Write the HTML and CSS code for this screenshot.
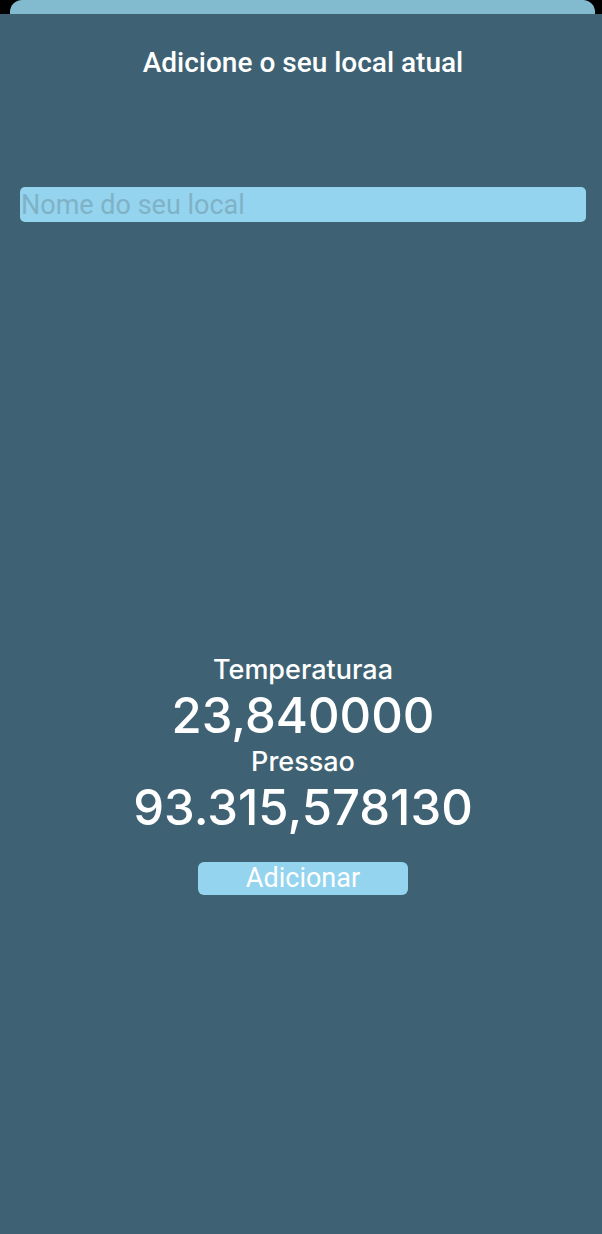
FILE: index.html
```html
<!DOCTYPE html>
<html lang="pt">
<head>
<meta charset="utf-8">
<link rel="stylesheet" href="styles.css">
</head>
<body>
<div class="back-sheet"></div>
<main class="sheet">
  <h1 class="title">Adicione o seu local atual</h1>
  <input class="name-input" type="text" placeholder="Nome do seu local">
  <section class="readings">
    <div class="label">Temperaturaa</div>
    <div class="value">23,840000</div>
    <div class="label">Pressao</div>
    <div class="value">93.315,578130</div>
    <button class="add-btn">Adicionar</button>
  </section>
</main>
</body>
</html>
```

FILE: styles.css
```css
html, body {
  margin: 0;
  padding: 0;
  background: #000;
  height: 100%;
}
body {
  display: flex;
  flex-direction: column;
  width: 602px;
  height: 1234px;
  overflow: hidden;
}
.back-sheet {
  height: 14px;
  margin: 0 7px 0 10px;
  background: #82bad0;
  border-radius: 12px 12px 0 0;
  flex: none;
}
.sheet {
  flex: 1;
  background: #3e6273;
  display: flex;
  flex-direction: column;
  align-items: center;
  padding-left: 4px;
}
.title {
  margin: 33px 0 0;
  font-family: Roboto, "Noto Sans", sans-serif;
  font-weight: 500;
  font-size: 28px;
  line-height: 32px;
  color: #fff;
}
.name-input {
  box-sizing: border-box;
  align-self: stretch;
  margin: 108px 16px 0 16px;
  height: 35px;
  padding: 0 0 0 1px;
  border: none;
  outline: none;
  border-radius: 5px;
  background: #95d4ee;
  font-family: Roboto, "Noto Sans", sans-serif;
  font-size: 27px;
  color: #fff;
}
.name-input::placeholder {
  color: #7fb2c6;
}
.readings {
  margin-top: 432px;
  display: flex;
  flex-direction: column;
  align-items: center;
  font-family: Inter, "Noto Sans", sans-serif;
  color: #fff;
}
.label {
  font-size: 27px;
  font-weight: 500;
  line-height: 32px;
}
.value {
  font-size: 49px;
  font-weight: 500;
  line-height: 60px;
}
.add-btn {
  margin-top: 24px;
  width: 210px;
  height: 33px;
  border: none;
  border-radius: 6px;
  background: #95d4ee;
  color: #fff;
  font-family: Roboto, "Noto Sans", sans-serif;
  font-size: 27px;
  padding: 0;
  line-height: 33px;
}
```
